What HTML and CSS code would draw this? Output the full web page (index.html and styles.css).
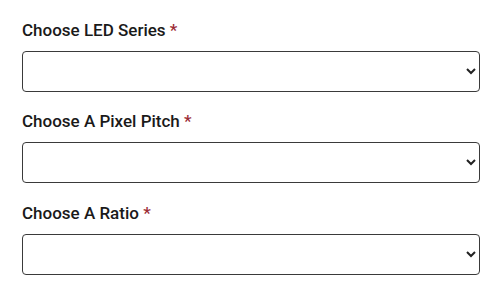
FILE: index.html
```html
<!DOCTYPE html>
<html lang="en">
<head>
    <meta charset="UTF-8">
    <meta name="viewport" content="width=device-width, initial-scale=1.0">
    <title>LED Configurator</title>
    <link rel="stylesheet" href="styles.css">
</head>
<body>
    <form class="config-form">
        <!-- LED series -->
        <div class="field">
            <label for="series">Choose LED Series <span class="required">*</span></label>
            <select id="series" required>
                <option value=""></option>
            </select>
        </div>

        <!-- Pixel pitch -->
        <div class="field">
            <label for="pitch">Choose A Pixel Pitch <span class="required">*</span></label>
            <select id="pitch" required>
                <option value=""></option>
            </select>
        </div>

        <!-- Ratio -->
        <div class="field">
            <label for="ratio">Choose A Ratio <span class="required">*</span></label>
            <select id="ratio" required>
                <option value=""></option>
            </select>
        </div>
    </form>
</body>
</html>
```

FILE: styles.css
```css
body {
    margin: 0;
    padding: 0;
    background-color: #fff;
    font-family: Roboto, "Liberation Sans", Arial, sans-serif;
    color: #1a1a1a;
}

.config-form {
    padding: 17.5px 20px 0 22px;
}

.field {
    margin-bottom: 17.5px;
}

.field label {
    display: block;
    margin-bottom: 9px;
    font-size: 17px;
    font-weight: 500;
    line-height: 24px;
}

.required {
    color: #9b2c35;
}

.field select {
    display: block;
    width: 100%;
    height: 41px;
    box-sizing: border-box;
    padding: 0 8px;
    font-family: inherit;
    font-size: 15px;
    background-color: #fff;
    border: 1px solid #3a3a3a;
    border-radius: 4px;
    color: #222;
}
```
